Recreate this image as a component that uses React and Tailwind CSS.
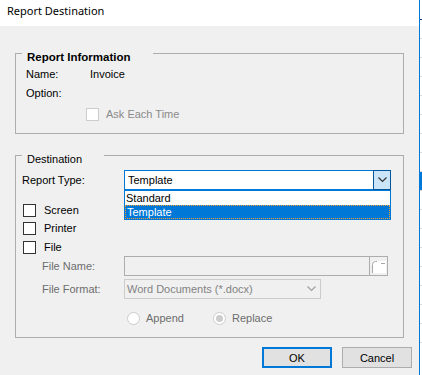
import React from "react";

function Check({ disabled }) {
    return (
        <span
            className={`block w-[13px] h-[13px] border bg-white ${disabled ? 'border-[#cccccc]' : 'border-[#333333]'}`}
        />
    );
}

function Radio({ checked }) {
    return (
        <span className="flex items-center justify-center w-[13px] h-[13px] rounded-full border border-[#cccccc] bg-white">
            {checked && <span className="block w-[7px] h-[7px] rounded-full bg-[#cccccc]" />}
        </span>
    );
}

function Chevron({ color }) {
    return (
        <svg width="9" height="6" viewBox="0 0 9 6">
            <polyline points="0.5,0.5 4.5,4.5 8.5,0.5" fill="none" stroke={color} strokeWidth="1.2" />
        </svg>
    );
}

export default function App() {
    const stripRows = [0, 1, 2, 3, 4, 5, 6, 7, 8, 9, 10, 11, 12, 13, 14, 15, 16];

    return (
        <div className="w-[422px] h-[375px] flex overflow-hidden bg-white text-[11px] text-black font-['Liberation_Sans',Arial,sans-serif]">
            {/* Dialog */}
            <div className="w-[419px] h-full flex flex-col bg-[#f0f0f0]">
                {/* Title bar */}
                <div className="h-[26px] shrink-0 bg-white pl-[7px] pt-[4px] text-[11px] leading-[14px] font-['Noto_Sans',sans-serif]">
                    Report Destination
                </div>

                {/* Report Information */}
                <fieldset className="mx-[15px] mt-[16px] h-[92px] border border-[#adadad] p-0">
                    <legend className="ml-[6px] w-[131px] pt-[8px] pl-[5px] text-[11.5px] font-bold leading-[14px]">
                        Report Information
                    </legend>
                    <div className="mt-[3px] flex h-[14px] items-center pl-[10px] leading-[14px]">
                        <span className="w-[64px]">Name:</span>
                        <span>Invoice</span>
                    </div>
                    <div className="mt-[5px] flex h-[14px] items-center pl-[10px] leading-[14px]">
                        <span>Option:</span>
                    </div>
                    <div className="mt-[8px] flex h-[13px] items-center pl-[70px] leading-[13px]">
                        <Check disabled />
                        <span className="ml-[7px] text-[#8a8a8a]">Ask Each Time</span>
                    </div>
                </fieldset>

                {/* Destination */}
                <fieldset className="mx-[15px] mt-[10px] h-[194px] border border-[#adadad] p-0">
                    <legend className="ml-[6px] w-[82px] pt-[8px] pl-[5px] leading-[14px]">
                        Destination
                    </legend>

                    <div className="mt-[4px] flex h-[20px] items-center pl-[6px]">
                        <span className="w-[102px]">Report Type:</span>
                        <div className="relative flex h-[20px] w-[267px] items-center border border-[#0078d7] bg-white">
                            <span className="flex-1 pl-[3px] leading-[14px]">Template</span>
                            <span className="-my-px -mr-px flex h-[20px] w-[18px] items-center justify-center border border-[#005499] bg-[#cce4f7]">
                                <Chevron color="#333333" />
                            </span>
                            {/* open list */}
                            <div className="absolute left-[-1px] top-[19px] w-[267px] border border-[#0078d7] bg-white leading-[14px]">
                                <div className="h-[14px] pl-[1px]">Standard</div>
                                <div className="h-[14px] border border-dotted border-[#f0a030] bg-[#0078d7] pl-[1px] leading-[12px] text-white">
                                    Template
                                </div>
                            </div>
                        </div>
                    </div>

                    <div className="mt-[14px] flex h-[13px] items-center pl-[7px]">
                        <Check />
                        <span className="ml-[8px]">Screen</span>
                    </div>
                    <div className="mt-[5px] flex h-[13px] items-center pl-[7px]">
                        <Check />
                        <span className="ml-[8px]">Printer</span>
                    </div>
                    <div className="mt-[6px] flex h-[13px] items-center pl-[7px]">
                        <Check />
                        <span className="ml-[8px]">File</span>
                    </div>

                    <div className="mt-[2px] flex h-[20px] items-center pl-[26px] text-[#6d6d6d]">
                        <span className="w-[82px]">File Name:</span>
                        <div className="flex h-[20px] w-[264px] border border-[#adadad] bg-[#f0f0f0]">
                            <span className="flex-1" />
                            <span className="flex w-[18px] items-center justify-center border-l border-[#adadad]">
                                <svg width="15" height="13" viewBox="0 0 15 13">
                                    <rect x="1" y="1" width="14" height="12" fill="#ffffff" />
                                    <path d="M1.5 13 V4.5 Q1.5 1.5 4.5 1.5 H6" fill="none" stroke="#a8a8a8" strokeWidth="1" />
                                    <path d="M10 3.5 H14" fill="none" stroke="#a8a8a8" strokeWidth="1" />
                                </svg>
                            </span>
                        </div>
                    </div>

                    <div className="mt-[3px] flex h-[20px] items-center pl-[26px] text-[#6d6d6d]">
                        <span className="w-[82px]">File Format:</span>
                        <div className="flex h-[20px] w-[197px] items-center border border-[#cccccc] bg-[#f0f0f0]">
                            <span className="flex-1 pl-[2px] text-[#838383]">Word Documents (*.docx)</span>
                            <span className="flex w-[18px] items-center justify-center">
                                <Chevron color="#a0a0a0" />
                            </span>
                        </div>
                    </div>

                    <div className="mt-[13px] flex h-[13px] items-center pl-[111px] text-[#6d6d6d]">
                        <div className="flex w-[86px] items-center">
                            <Radio />
                            <span className="ml-[6px]">Append</span>
                        </div>
                        <div className="flex items-center">
                            <Radio checked />
                            <span className="ml-[6px]">Replace</span>
                        </div>
                    </div>
                </fieldset>

                {/* Buttons */}
                <div className="mt-[9px] flex justify-end gap-[10px] pr-[7px]">
                    <button className="h-[21px] w-[70px] border-2 border-[#0078d7] bg-[#e1e1e1] leading-[14px]">OK</button>
                    <button className="h-[21px] w-[70px] border border-[#adadad] bg-[#e1e1e1] leading-[14px]">Cancel</button>
                </div>
            </div>

            {/* Edge of the window behind */}
            <div className="flex-1 flex flex-col border-l border-[#0078d7] bg-white">
                <div className="h-[20px] border-b border-[#0b3a78]" />
                {stripRows.map((i) => (
                    <div
                        key={i}
                        className={`h-[19px] border-b border-[#d9d9d9] ${i === 8 ? 'bg-[#0078d7]' : ''}`}
                    />
                ))}
            </div>
        </div>
    );
}
